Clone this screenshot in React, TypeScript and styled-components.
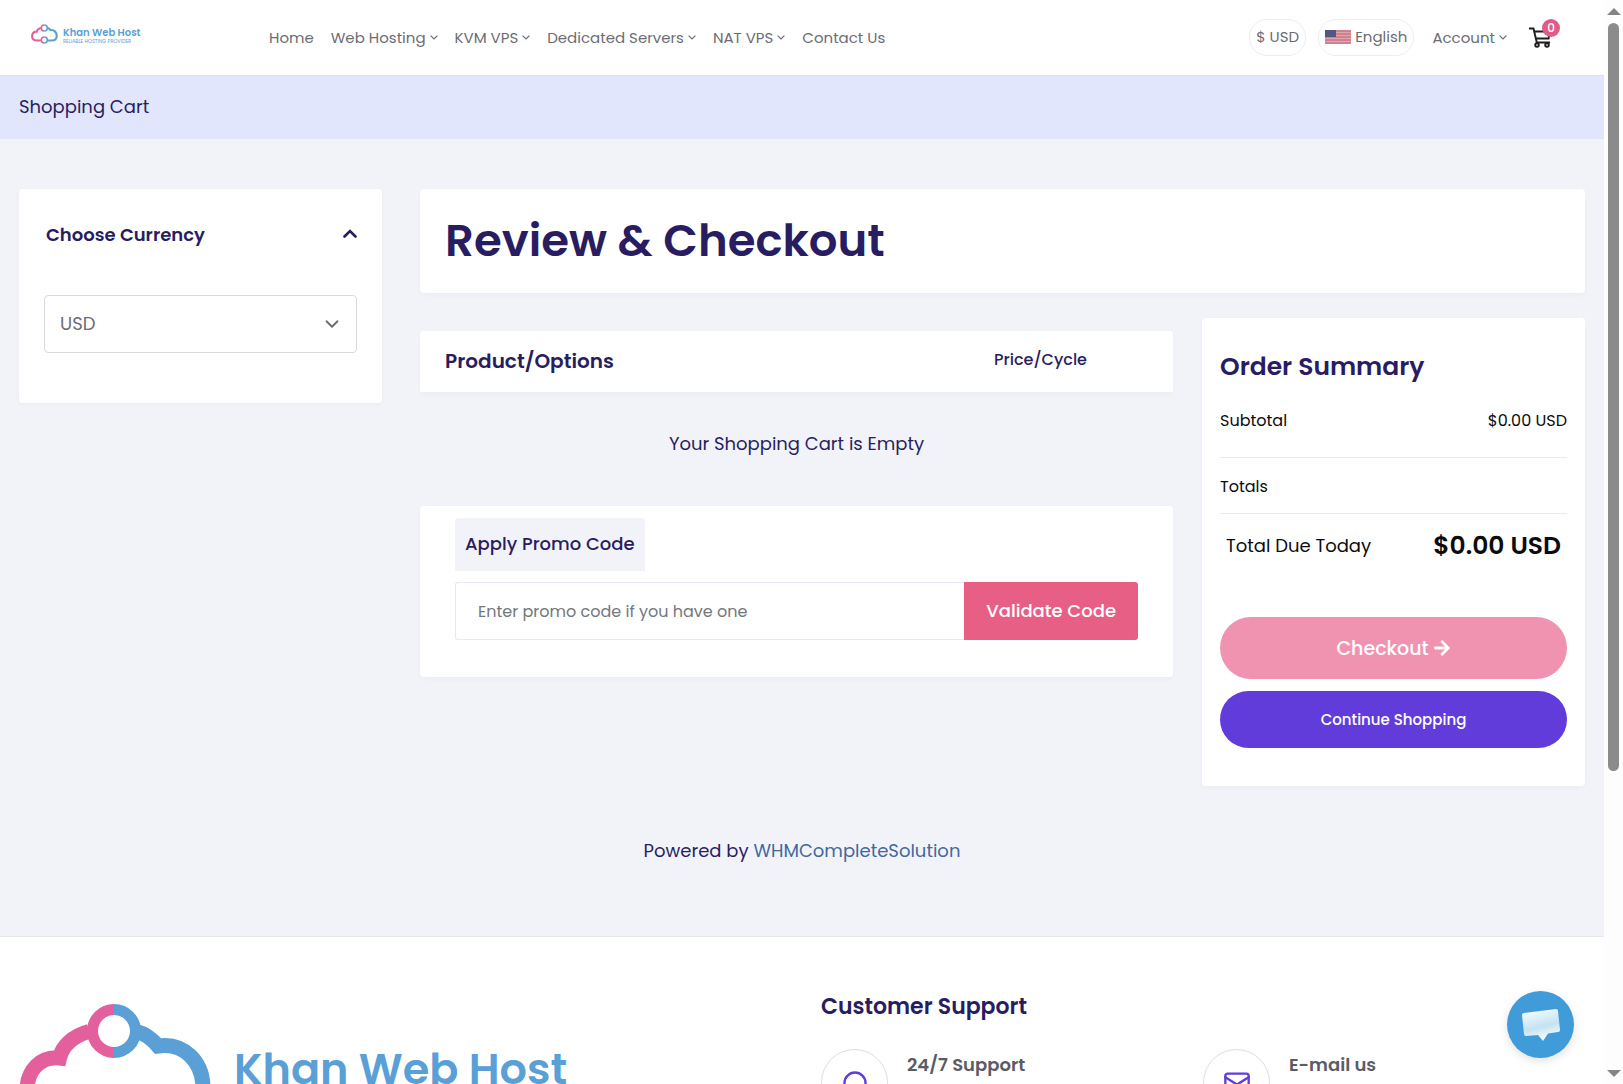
import React, { useState } from "react";
import styled, { createGlobalStyle, css } from "styled-components";
import { ChevronDown, Headphones, Mail } from "lucide-react";
import { FaArrowRight } from "react-icons/fa";

const color = {
  ink: "#291d62",
  grey: "#6c6c74",
  page: "#f1f3f8",
  line: "#e9eaf0",
  pink: "#e85f86",
  violet: "#623cdb",
  logoPink: "#e4609d",
  logoBlue: "#5a9fd6",
};

const GlobalStyle = createGlobalStyle`
  * { box-sizing: border-box; }
  body {
    margin: 0;
    background: #fff;
    color: ${color.ink};
    font-family: Poppins, Inter, "Liberation Sans", sans-serif;
    font-size: 18px;
  }
  h1, h2, h3, p, dl, dd, dt { margin: 0; padding: 0; }
  a { color: inherit; text-decoration: none; }
  button, input, select { font: inherit; color: inherit; }
  button { cursor: pointer; }
`;

const Shell = styled.div`
  display: grid;
  grid-template-columns: minmax(0, 1fr) 19px;
  height: 100vh;
  overflow: hidden;
`;

const Page = styled.div`
  min-width: 0;
  overflow: hidden;
`;

const Rail = styled.div`
  display: flex;
  flex-direction: column;
  align-items: center;
  padding: 8px 0 7px;
  height: 100vh;
  background: #fdfdfd;
`;

const RailTrack = styled.div`
  flex: 1;
  width: 11px;
  padding: 8px 0;
`;

const RailThumb = styled.div`
  height: 72%;
  border-radius: 6px;
  background: #8a8b8a;
`;

const RailArrow = styled.i<{ $down?: boolean }>`
  border: 7px solid transparent;
  ${(p) =>
    p.$down
      ? css`border-top-color: #858585; border-bottom-width: 0;`
      : css`border-bottom-color: #858585; border-top-width: 0;`}
`;

/* header */

const Header = styled.header`
  display: flex;
  align-items: center;
  height: 75px;
  padding: 0 53px 0 31px;
  background: #fff;
  font-size: 15px;
  color: ${color.grey};
`;

const Brand = styled.a`
  display: flex;
  align-items: flex-start;
  gap: 5px;
  width: 238px;
  height: 28px;
  color: ${color.logoBlue};
`;

const BrandWords = styled.span`
  display: flex;
  flex-direction: column;
  padding-top: 3px;
  font-weight: 600;
  font-size: 10px;
  line-height: 12px;
  white-space: nowrap;
`;

const Tagline = styled.small`
  font-size: 5px;
  font-weight: 400;
  line-height: 5px;
`;

const Nav = styled.nav`
  display: flex;
  gap: 17px;
`;

const navItem = css`
  display: inline-flex;
  align-items: center;
  gap: 4px;
  padding: 0;
  border: 0;
  background: none;
  color: ${color.grey};
  line-height: 24px;
  white-space: nowrap;
`;

const NavLink = styled.a`${navItem}`;
const NavButton = styled.button`${navItem}`;

const Tools = styled.div`
  display: flex;
  align-items: center;
  margin-left: auto;
`;

const Pill = styled.button`
  display: flex;
  align-items: center;
  gap: 4px;
  height: 37px;
  margin-right: 12px;
  padding: 0 6px 2px;
  border: 1px solid #eeeeee;
  border-radius: 18px;
  background: #fff;
  color: ${color.grey};
  white-space: nowrap;
`;

const Account = styled(NavButton)`
  margin: 0 22px 0 6px;
`;

const CartLink = styled.a`
  position: relative;
  display: block;
  width: 22px;
  height: 21px;
  color: #1d1d1f;
`;

const Count = styled.span`
  position: absolute;
  top: -8px;
  right: -9px;
  width: 18px;
  height: 18px;
  border-radius: 50%;
  background: #df5c88;
  color: #fff;
  font-size: 12px;
  font-weight: 500;
  line-height: 18px;
  text-align: center;
`;

/* title strip and content */

const Strip = styled.div`
  padding: 0 19px 2px;
  border-top: 1px solid #dcdff0;
  background: #e1e6fc;
  line-height: 61px;
`;

const Main = styled.main`
  padding: 50px 19px 72px;
  background: ${color.page};
  border-bottom: 1px solid ${color.line};
`;

const Columns = styled.div`
  display: grid;
  grid-template-columns: minmax(0, 24fr) minmax(0, 77fr);
  gap: 38px;
  align-items: start;
`;

const Card = styled.section`
  border-radius: 4px;
  background: #fff;
  box-shadow: 0 2px 4px rgba(60, 60, 100, 0.03);
`;

const CurrencyCard = styled(Card)`
  padding: 33px 25px 50px;
`;

const CurrencyHead = styled.label`
  display: flex;
  align-items: center;
  justify-content: space-between;
  padding-left: 2px;
  margin-bottom: 47px;
  font-weight: 600;
  line-height: 26px;
`;

const SelectWrap = styled.div`
  display: grid;
  align-items: center;
  color: ${color.grey};
  & > * { grid-area: 1 / 1; }
  & > svg { justify-self: end; margin-right: 14px; pointer-events: none; }
`;

const Select = styled.select`
  appearance: none;
  width: 100%;
  height: 58px;
  padding: 0 15px 2px;
  border: 1px solid #d9d9dd;
  border-radius: 4px;
  background: #fff;
  color: ${color.grey};
`;

const TitleCard = styled(Card)`
  padding: 22px 25px;
`;

const Title = styled.h1`
  font-size: 45px;
  font-weight: 600;
  line-height: 60px;
`;

const CheckoutGrid = styled.div`
  display: grid;
  grid-template-columns: minmax(0, 753fr) minmax(0, 383fr);
  gap: 29px;
  align-items: start;
  margin-top: 25px;
`;

const CartColumn = styled.div`
  padding-top: 13px;
`;

const ItemsHead = styled(Card)`
  display: grid;
  grid-template-columns: minmax(0, 3fr) minmax(0, 1fr);
  padding: 0 20px 0 25px;
  border-radius: 4px 4px 0 0;
  line-height: 60px;
  height: 61px;
`;

const ItemsTitle = styled.h2`
  font-size: 20px;
  font-weight: 600;
`;

const PriceTitle = styled.h3`
  padding-left: 18px;
  font-size: 16px;
  font-weight: 500;
  line-height: 58px;
`;

const Empty = styled.p`
  padding: 39px 0 49px;
  line-height: 26px;
  text-align: center;
`;

const PromoCard = styled(Card)`
  padding: 12px 35px 37px;
`;

const Tab = styled.label`
  display: block;
  width: fit-content;
  padding: 0 10px 2px;
  margin-bottom: 11px;
  border-radius: 4px 4px 0 0;
  background: ${color.page};
  font-weight: 500;
  line-height: 51px;
`;

const PromoForm = styled.form`
  display: flex;
  height: 58px;
`;

const PromoInput = styled.input`
  flex: 1;
  min-width: 0;
  padding: 0 22px;
  border: 1px solid ${color.line};
  border-right: 0;
  border-radius: 3px 0 0 3px;
  font-size: 16px;
  outline: 0;
  &::placeholder { color: #74777b; opacity: 1; }
`;

const Validate = styled.button`
  padding: 0 22px 2px;
  border: 0;
  border-radius: 0 3px 3px 0;
  background: ${color.pink};
  color: #fff;
  font-weight: 500;
  white-space: nowrap;
`;

const Summary = styled(Card)`
  padding: 34px 18px 38px;
  color: #0c0c0e;
`;

const SummaryTitle = styled.h2`
  margin-bottom: 27px;
  color: ${color.ink};
  font-size: 25px;
  font-weight: 600;
  line-height: 30px;
`;

const SummaryRow = styled.div<{ $after: number }>`
  display: flex;
  justify-content: space-between;
  padding-bottom: ${(p) => p.$after}px;
  margin-bottom: 17px;
  border-bottom: 1px solid ${color.line};
  font-size: 16px;
  line-height: 24px;
`;

const DueRow = styled.div`
  display: flex;
  justify-content: space-between;
  padding: 0 6px;
  margin-bottom: 56px;
  line-height: 30px;
`;

const DueAmount = styled.dd`
  font-size: 25px;
  font-weight: 600;
`;

const WideButton = styled.button<{ $tone: "soft" | "solid" }>`
  display: flex;
  align-items: center;
  justify-content: center;
  gap: 4px;
  width: 100%;
  border: 0;
  border-radius: 31px;
  color: #fff;
  font-weight: 500;
  ${(p) =>
    p.$tone === "soft"
      ? css`height: 62px; margin-bottom: 12px; background: #f093b0; font-size: 19px;`
      : css`height: 57px; background: ${color.violet}; font-size: 15px;`}
`;

const Powered = styled.p`
  padding-top: 52px;
  line-height: 26px;
  text-align: center;
  a { color: #42689c; }
`;

/* footer */

const Footer = styled.footer`
  display: grid;
  grid-template-columns: minmax(0, 1fr) minmax(0, 1fr);
  gap: 38px;
  padding: 56px 19px 60px;
  background: #fff;
`;

const FooterBrand = styled.a`
  display: flex;
  gap: 22px;
  padding-top: 11px;
  color: ${color.logoBlue};
`;

const FooterWords = styled.span`
  padding-top: 37px;
  font-size: 43px;
  font-weight: 600;
  line-height: 56px;
  white-space: nowrap;
`;

const SupportTitle = styled.h2`
  margin-bottom: 28px;
  font-size: 22px;
  font-weight: 600;
  line-height: 28px;
`;

const Contacts = styled.div`
  display: grid;
  grid-template-columns: 1fr 1fr;
`;

const Contact = styled.a`
  display: flex;
  gap: 19px;
  color: #5b5b66;
  font-weight: 600;
  line-height: 32px;
`;

const Ring = styled.span`
  display: grid;
  place-items: center;
  width: 67px;
  height: 67px;
  border: 1px solid #dcdce6;
  border-radius: 50%;
  color: ${color.violet};
`;

const Chat = styled.button`
  position: fixed;
  right: 49px;
  bottom: 26px;
  display: grid;
  place-items: center;
  width: 67px;
  height: 67px;
  padding: 0;
  border: 0;
  border-radius: 50%;
  background: #409bd9;
  box-shadow: 0 3px 10px rgba(0, 0, 0, 0.12);
`;

const Mark = styled.svg`
  flex: none;
`;

function CloudMark({ width, height }: { width: number; height: number }) {
  return (
    <Mark width={width} height={height} viewBox="0 0 193 141" aria-hidden="true">
      <g fill="none" strokeWidth="15">
        <g stroke={color.logoPink}>
          <path d="M70 27.5C53 32 43 43 40.5 54C21 52 8 67 8 86C8 106 24 117 44 117H70" />
          <path d="M95 5.5A21.5 21.5 0 0 0 95 48.5" strokeWidth="11" />
          <path d="M95 91.5A21.5 21.5 0 0 0 95 134.5" strokeWidth="11" />
        </g>
        <g stroke={color.logoBlue}>
          <path d="M119 28C127 30 133 35 139 42C165 38 184 58 184 84C184 106 168 117 148 117H119" />
          <path d="M95 5.5A21.5 21.5 0 0 1 95 48.5" strokeWidth="11" />
          <path d="M95 91.5A21.5 21.5 0 0 1 95 134.5" strokeWidth="11" />
        </g>
      </g>
    </Mark>
  );
}

function Caret() {
  return (
    <svg width="8" height="5" viewBox="0 0 8 5" fill="none" stroke="currentColor" strokeWidth="1.2" aria-hidden="true">
      <path d="M0.6 0.6L4 4L7.4 0.6" />
    </svg>
  );
}

function CollapseIcon() {
  return (
    <svg width="14" height="12" viewBox="0 0 14 12" fill="none" stroke="currentColor" strokeWidth="2.6" strokeLinecap="round" aria-hidden="true">
      <path d="M1.5 7.5L7 2L12.5 7.5" />
    </svg>
  );
}

function Flag() {
  return (
    <svg width="26" height="14" viewBox="0 0 26 14" aria-hidden="true">
      <rect width="26" height="14" fill="#cf8190" />
      <path d="M0 2.5H26M0 5.5H26M0 8.5H26M0 11.5H26" stroke="#dda5ae" />
      <rect width="11" height="7" fill="#555681" />
    </svg>
  );
}

function CartIcon() {
  return (
    <svg width="22" height="21" viewBox="0 0 22 21" fill="none" stroke="currentColor" strokeWidth="1.9" aria-hidden="true">
      <path d="M0 1.5H4.5L7.8 15.5H21M5.2 4.5H20.5L19.6 11.5H7" />
      <circle cx="8" cy="18" r="1.8" />
      <circle cx="18" cy="18" r="1.8" />
    </svg>
  );
}

function ChatBubble() {
  return (
    <svg width="40" height="34" viewBox="0 0 40 34" aria-hidden="true">
      <defs>
        <linearGradient id="bubble" x1="0" y1="0" x2="0.3" y2="1">
          <stop offset="0" stopColor="#ffffff" />
          <stop offset="0.65" stopColor="#c3e3f1" />
          <stop offset="1" stopColor="#f2fbfd" />
        </linearGradient>
      </defs>
      <path d="M3 5L35 1Q37 1 37 3L39 22Q39 24 37 24L27 25.5L22 33L17 27L5 28Q3 28 3 26L1 7Q1 5 3 5Z" fill="url(#bubble)" />
    </svg>
  );
}

const menu = [
  { text: "Home" },
  { text: "Web Hosting", more: true },
  { text: "KVM VPS", more: true },
  { text: "Dedicated Servers", more: true },
  { text: "NAT VPS", more: true },
  { text: "Contact Us" },
];

export default function App() {
  const [promo, setPromo] = useState("");

  return (
    <Shell>
      <GlobalStyle />
      <Page>
        <Header>
          <Brand href="#">
            <CloudMark width={27} height={20} />
            <BrandWords>
              Khan Web Host
              <Tagline>RELIABLE HOSTING PROVIDER</Tagline>
            </BrandWords>
          </Brand>
          <Nav aria-label="Main">
            {menu.map((m) =>
              m.more ? (
                <NavButton key={m.text} type="button">
                  {m.text}
                  <Caret />
                </NavButton>
              ) : (
                <NavLink key={m.text} href="#">{m.text}</NavLink>
              )
            )}
          </Nav>
          <Tools>
            <Pill type="button">$ USD</Pill>
            <Pill type="button"><Flag />English</Pill>
            <Account type="button">
              Account
              <Caret />
            </Account>
            <CartLink href="#" aria-label="Cart">
              <CartIcon />
              <Count>0</Count>
            </CartLink>
          </Tools>
        </Header>

        <Strip>Shopping Cart</Strip>

        <Main>
          <Columns>
            <CurrencyCard>
              <CurrencyHead htmlFor="currency">
                Choose Currency
                <CollapseIcon />
              </CurrencyHead>
              <SelectWrap>
                <Select id="currency" defaultValue="USD">
                  <option>USD</option>
                </Select>
                <ChevronDown size={22} strokeWidth={2} />
              </SelectWrap>
            </CurrencyCard>

            <div>
              <TitleCard>
                <Title>Review &amp; Checkout</Title>
              </TitleCard>
              <CheckoutGrid>
                <CartColumn>
                  <ItemsHead>
                    <ItemsTitle>Product/Options</ItemsTitle>
                    <PriceTitle>Price/Cycle</PriceTitle>
                  </ItemsHead>
                  <Empty>Your Shopping Cart is Empty</Empty>
                  <PromoCard>
                    <Tab htmlFor="promo">Apply Promo Code</Tab>
                    <PromoForm onSubmit={(e) => e.preventDefault()}>
                      <PromoInput
                        id="promo"
                        placeholder="Enter promo code if you have one"
                        value={promo}
                        onChange={(e) => setPromo(e.target.value)}
                      />
                      <Validate type="submit">Validate Code</Validate>
                    </PromoForm>
                  </PromoCard>
                </CartColumn>

                <Summary>
                  <SummaryTitle>Order Summary</SummaryTitle>
                  <dl>
                    <SummaryRow $after={24}>
                      <dt>Subtotal</dt>
                      <dd>$0.00 USD</dd>
                    </SummaryRow>
                    <SummaryRow $after={14}>
                      <dt>Totals</dt>
                    </SummaryRow>
                    <DueRow>
                      <dt>Total Due Today</dt>
                      <DueAmount>$0.00 USD</DueAmount>
                    </DueRow>
                  </dl>
                  <WideButton type="button" $tone="soft">
                    Checkout <FaArrowRight size={18} />
                  </WideButton>
                  <WideButton type="button" $tone="solid">Continue Shopping</WideButton>
                </Summary>
              </CheckoutGrid>
            </div>
          </Columns>
          <Powered>
            Powered by <a href="#">WHMCompleteSolution</a>
          </Powered>
        </Main>

        <Footer>
          <FooterBrand href="#">
            <CloudMark width={193} height={141} />
            <FooterWords>Khan Web Host</FooterWords>
          </FooterBrand>
          <div>
            <SupportTitle>Customer Support</SupportTitle>
            <Contacts>
              <Contact href="#">
                <Ring><Headphones size={28} strokeWidth={2} /></Ring>
                24/7 Support
              </Contact>
              <Contact href="#">
                <Ring><Mail size={28} strokeWidth={2} /></Ring>
                E-mail us
              </Contact>
            </Contacts>
          </div>
        </Footer>
      </Page>
      <Rail aria-hidden="true">
        <RailArrow />
        <RailTrack><RailThumb /></RailTrack>
        <RailArrow $down />
      </Rail>
      <Chat type="button" aria-label="Open chat"><ChatBubble /></Chat>
    </Shell>
  );
}
